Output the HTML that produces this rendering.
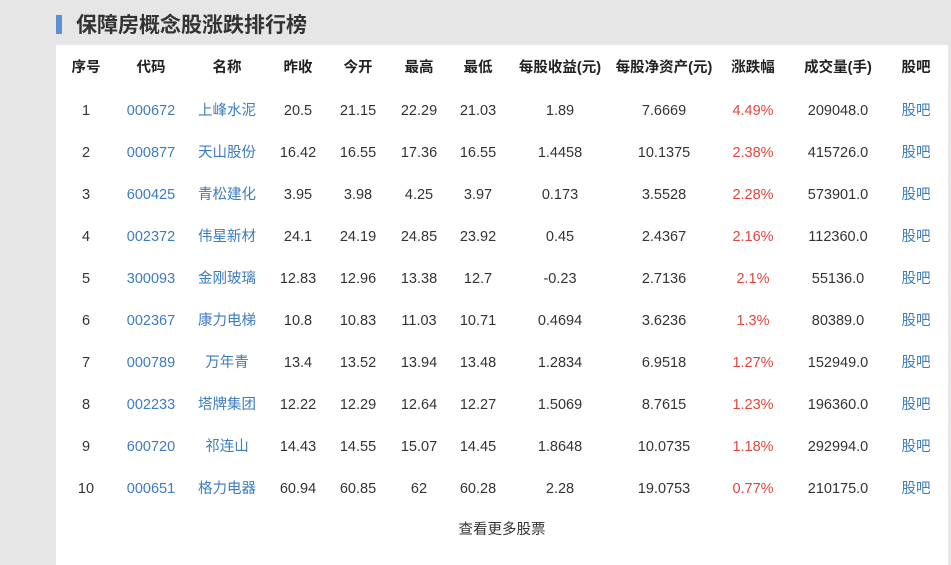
<!DOCTYPE html>
<html><head><meta charset="utf-8"><style>
body{margin:0;width:951px;height:548px;background:#e6e6e6;position:relative;overflow:hidden;font-family:"Liberation Sans","Noto Sans CJK SC",sans-serif;font-size:14.5px;color:#333}
.bar{position:absolute;left:56px;top:15px;width:6px;height:19px;background:#5b8fd0}
.title{position:absolute;left:76px;top:13px;font-size:21px;font-weight:bold;color:#333;line-height:26px}
.panel{position:absolute;left:56px;top:45px;width:892px;height:520px;background:#fff}
.c{position:absolute;width:120px;text-align:center;line-height:20px;white-space:nowrap}
.h{font-weight:bold;color:#222}
.b{color:#3d7cc0}.r{color:#e0463c}
</style></head><body>
<div class="bar"></div><div class="title">保障房概念股涨跌排行榜</div>
<div class="panel"></div>
<div id="t"></div>
<div class="c" style="left:442px;top:520px;color:#333">查看更多股票</div>
<script>
var X=[86,151,227,298,358,419,478,560,664,753,838,916];
var H=["序号","代码","名称","昨收","今开","最高","最低","每股收益(元)","每股净资产(元)","涨跌幅","成交量(手)","股吧"];
var D=[
["1","000672","上峰水泥","20.5","21.15","22.29","21.03","1.89","7.6669","4.49%","209048.0"],
["2","000877","天山股份","16.42","16.55","17.36","16.55","1.4458","10.1375","2.38%","415726.0"],
["3","600425","青松建化","3.95","3.98","4.25","3.97","0.173","3.5528","2.28%","573901.0"],
["4","002372","伟星新材","24.1","24.19","24.85","23.92","0.45","2.4367","2.16%","112360.0"],
["5","300093","金刚玻璃","12.83","12.96","13.38","12.7","-0.23","2.7136","2.1%","55136.0"],
["6","002367","康力电梯","10.8","10.83","11.03","10.71","0.4694","3.6236","1.3%","80389.0"],
["7","000789","万年青","13.4","13.52","13.94","13.48","1.2834","6.9518","1.27%","152949.0"],
["8","002233","塔牌集团","12.22","12.29","12.64","12.27","1.5069","8.7615","1.23%","196360.0"],
["9","600720","祁连山","14.43","14.55","15.07","14.45","1.8648","10.0735","1.18%","292994.0"],
["10","000651","格力电器","60.94","60.85","62","60.28","2.28","19.0753","0.77%","210175.0"]];
var s="";
H.forEach(function(h,i){s+='<div class="c h" style="left:'+(X[i]-60)+'px;top:58px">'+h+'</div>';});
D.forEach(function(r,j){r=r.concat(["股吧"]);var y=101+42*j;
r.forEach(function(v,i){var cl=(i==1||i==2||i==11)?"b":(i==9?"r":"");
s+='<div class="c '+cl+'" style="left:'+(X[i]-60)+'px;top:'+y+'px">'+v+'</div>';});});
document.getElementById("t").innerHTML=s;
</script>
</body></html>
